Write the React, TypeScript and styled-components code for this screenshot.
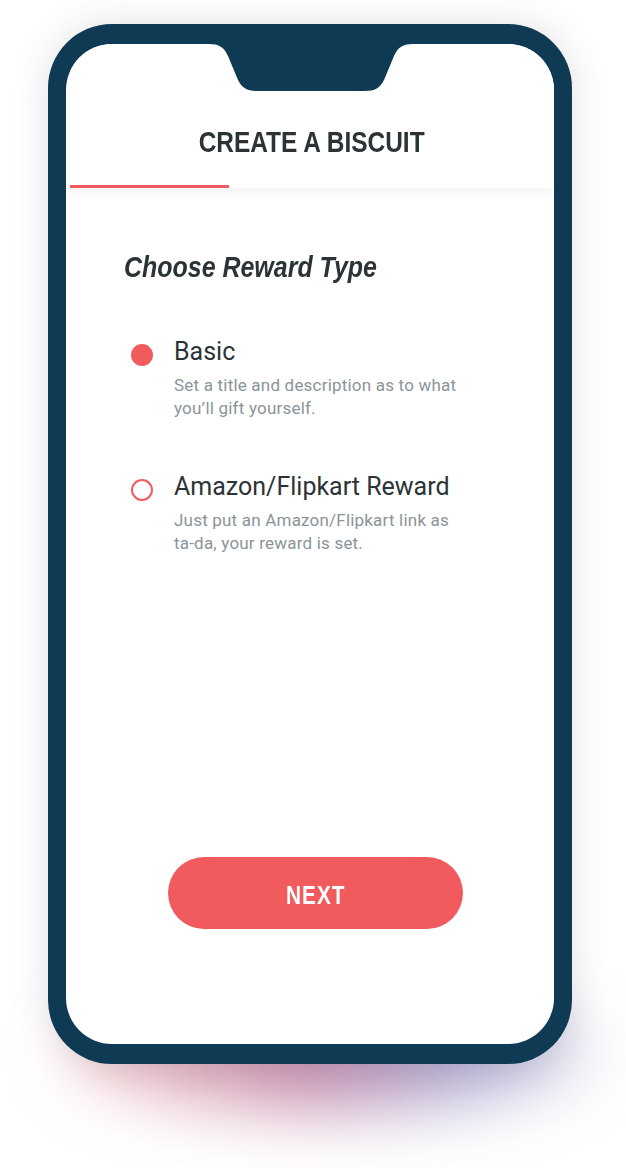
import React, { useState } from "react";
import styled, { createGlobalStyle } from "styled-components";

const GlobalStyle = createGlobalStyle`
  html, body {
    margin: 0;
    padding: 0;
    background: #ffffff;
  }
  body {
    font-family: Roboto, "Liberation Sans", sans-serif;
  }
  * { box-sizing: border-box; }
`;

const NAVY = "#0e3b53";
const CORAL = "#f15b5d";
const INK = "#2c3336";
const MUTED = "#8a9499";

const Stage = styled.div`
  position: relative;
  width: 626px;
  height: 1168px;
  padding: 24px 0 0 48px;
  overflow: hidden;
`;

const Glow = styled.div`
  position: absolute;
  left: 70px;
  top: 990px;
  width: 520px;
  height: 120px;
  border-radius: 50%;
  background: linear-gradient(
    90deg,
    rgba(235, 150, 150, 0.55) 0%,
    rgba(175, 95, 140, 0.7) 45%,
    rgba(110, 100, 170, 0.55) 75%,
    rgba(140, 140, 190, 0.35) 100%
  );
  filter: blur(32px);
`;

const Phone = styled.div`
  position: relative;
  width: 524px;
  height: 1040px;
  padding: 20px 18px 20px 18px;
  background: ${NAVY};
  border-radius: 64px;
  box-shadow: 0 0 36px rgba(70, 60, 90, 0.16);
`;

const Screen = styled.div`
  position: relative;
  height: 100%;
  background: #ffffff;
  border-radius: 46px;
  overflow: hidden;
  display: flex;
  flex-direction: column;
`;

const Notch = styled.svg`
  position: absolute;
  z-index: 2;
  top: 0;
  left: 143px;
  width: 204px;
  height: 47px;
`;

const Header = styled.header`
  display: flex;
  flex-direction: column;
  align-items: stretch;
  padding-top: 80px;
  margin-left: 4px;
  background: #ffffff;
  box-shadow: 0 6px 10px rgba(0, 0, 0, 0.045);
  position: relative;
  z-index: 1;
`;

const HeaderTitle = styled.h1`
  margin: 0;
  text-align: center;
  font-size: 30px;
  line-height: 36px;
`;

const Condensed = styled.span<{ $scale: number; $origin?: string }>`
  display: inline-block;
  font-family: "Liberation Sans", Arial, sans-serif;
  font-weight: 700;
  transform: scaleX(${(p) => p.$scale});
  transform-origin: ${(p) => p.$origin || "center"};
`;

const HeaderText = styled(Condensed)`
  color: ${INK};
`;

const TabIndicator = styled.div<{ $width: number }>`
  margin-top: 25px;
  width: ${(p) => p.$width}px;
  height: 3px;
  background: ${CORAL};
`;

const Content = styled.main`
  display: flex;
  flex-direction: column;
  padding: 61px 58px 0 58px;
`;

const SectionTitle = styled.h2`
  margin: 0;
  font-size: 30px;
  line-height: 36px;
  color: ${INK};
  white-space: nowrap;
`;

const SectionText = styled(Condensed)`
  font-style: italic;
`;

const OptionList = styled.div`
  display: flex;
  flex-direction: column;
  gap: 52px;
  margin-top: 52px;
`;

const Option = styled.label`
  display: flex;
  align-items: flex-start;
  gap: 21px;
  padding-left: 7px;
  cursor: pointer;
`;

const Radio = styled.span<{ $checked: boolean }>`
  flex: none;
  width: 22px;
  height: 22px;
  margin-top: 7px;
  border-radius: 50%;
  border: 2.5px solid ${CORAL};
  background: ${(p) => (p.$checked ? CORAL : "transparent")};
`;

const OptionText = styled.div`
  display: flex;
  flex-direction: column;
  gap: 7px;
`;

const OptionTitle = styled.span`
  font-family: Roboto, "Liberation Sans", sans-serif;
  font-weight: 400;
  font-size: 25px;
  line-height: 30px;
  color: ${INK};
`;

const OptionDesc = styled.p`
  margin: 0;
  width: 290px;
  font-family: Roboto, "Liberation Sans", sans-serif;
  font-weight: 400;
  font-size: 17px;
  line-height: 23px;
  color: ${MUTED};
  letter-spacing: 0.2px;
`;

const Footer = styled.footer`
  margin-top: auto;
  padding: 0 91px 115px 102px;
`;

const NextButton = styled.button`
  width: 100%;
  height: 72px;
  border: none;
  border-radius: 36px;
  background: ${CORAL};
  color: #ffffff;
  font-size: 25px;
  line-height: 30px;
  letter-spacing: 1.2px;
  cursor: pointer;
  padding: 3px 0 0 0;
`;

const options = [
  {
    id: "basic",
    title: "Basic",
    desc: "Set a title and description as to what you’ll gift yourself.",
  },
  {
    id: "amazon",
    title: "Amazon/Flipkart Reward",
    desc: "Just put an Amazon/Flipkart link as ta\u2011da, your reward is set.",
  },
];

export default function App() {
  const [selected, setSelected] = useState("basic");
  return (
    <>
      <GlobalStyle />
      <Stage>
        <Glow />
        <Phone>
          <Screen>
            <Header>
              <HeaderTitle>
                <HeaderText $scale={0.815}>CREATE A BISCUIT</HeaderText>
              </HeaderTitle>
              <TabIndicator $width={159} />
            </Header>
            <Content>
              <SectionTitle>
                <SectionText $scale={0.832} $origin="left">
                  Choose Reward Type
                </SectionText>
              </SectionTitle>
              <OptionList>
                {options.map((o) => (
                  <Option key={o.id} onClick={() => setSelected(o.id)}>
                    <Radio $checked={selected === o.id} />
                    <OptionText>
                      <OptionTitle>{o.title}</OptionTitle>
                      <OptionDesc>{o.desc}</OptionDesc>
                    </OptionText>
                  </Option>
                ))}
              </OptionList>
            </Content>
            <Footer>
              <NextButton>
                <Condensed $scale={0.83}>NEXT</Condensed>
              </NextButton>
            </Footer>
            <Notch viewBox="0 0 204 47" aria-hidden="true">
              <path
                d="M0 0 C10 0 15 3 19 12 L29 36 C33 44 38 47 48 47 L156 47 C166 47 171 44 175 36 L185 12 C189 3 194 0 204 0 Z"
                fill={NAVY}
              />
            </Notch>
          </Screen>
        </Phone>
      </Stage>
    </>
  );
}
